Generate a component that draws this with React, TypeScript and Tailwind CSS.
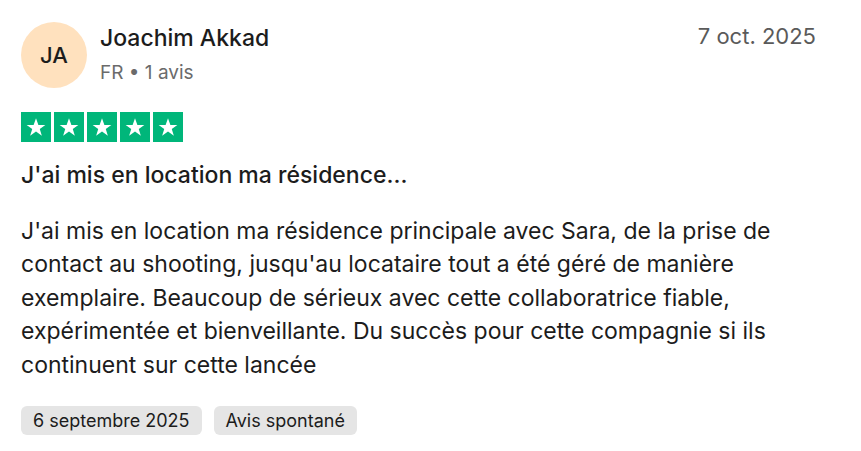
export default function App() {
  const stars = [0, 1, 2, 3, 4];
  return (
    <div className="w-[861px] h-[451px] bg-white px-[21px] pt-[22px] text-[#1c1c1c]" style={{ fontFamily: "Inter, 'Liberation Sans', sans-serif" }}>
      <div className="flex items-start">
        <div className="w-[66px] h-[66px] rounded-full bg-[#ffe1be] flex items-center justify-center text-[22px] font-medium text-[#1c1c1c]">
          JA
        </div>
        <div className="ml-[13px] flex-1">
          <div className="text-[23px] font-medium leading-[28px] mt-[2px]">Joachim Akkad</div>
          <div className="text-[19px] text-[#6b6b6b] leading-[24px] mt-[9px]">FR • 1 avis</div>
        </div>
        <div className="text-[22px] text-[#5a5a5a] leading-[28px] mr-[24px]">7 oct. 2025</div>
      </div>
      <div className="flex gap-[3px] mt-[24px]">
        {stars.map((i) => (
          <div key={i} className="w-[30px] h-[30px] bg-[#00b67a] flex items-center justify-center">
            <svg width="22" height="22" viewBox="0 0 24 24">
              <path d="M12 2.5l2.6 7.2h7.6l-6.1 4.5 2.3 7.3L12 17l-6.4 4.5 2.3-7.3-6.1-4.5h7.6z" fill="white" />
            </svg>
          </div>
        ))}
      </div>
      <div className="text-[23px] font-medium mt-[18px] leading-[30px]">J'ai mis en location ma résidence...</div>
      <p className="text-[23px] leading-[33.5px] mt-[24.5px] w-[800px]">
        J'ai mis en location ma résidence principale avec Sara, de la prise de contact au shooting, jusqu'au locataire tout a été géré de manière exemplaire. Beaucoup de sérieux avec cette collaboratrice fiable, expérimentée et bienveillante. Du succès pour cette compagnie si ils continuent sur cette lancée
      </p>
      <div className="flex gap-[12px] mt-[24px]">
        <span className="bg-[#e5e5e5] rounded-md px-[12px] h-[29px] flex items-center text-[18px]">6 septembre 2025</span>
        <span className="bg-[#e5e5e5] rounded-md px-[12px] h-[29px] flex items-center text-[18px]">Avis spontané</span>
      </div>
    </div>
  );
}
